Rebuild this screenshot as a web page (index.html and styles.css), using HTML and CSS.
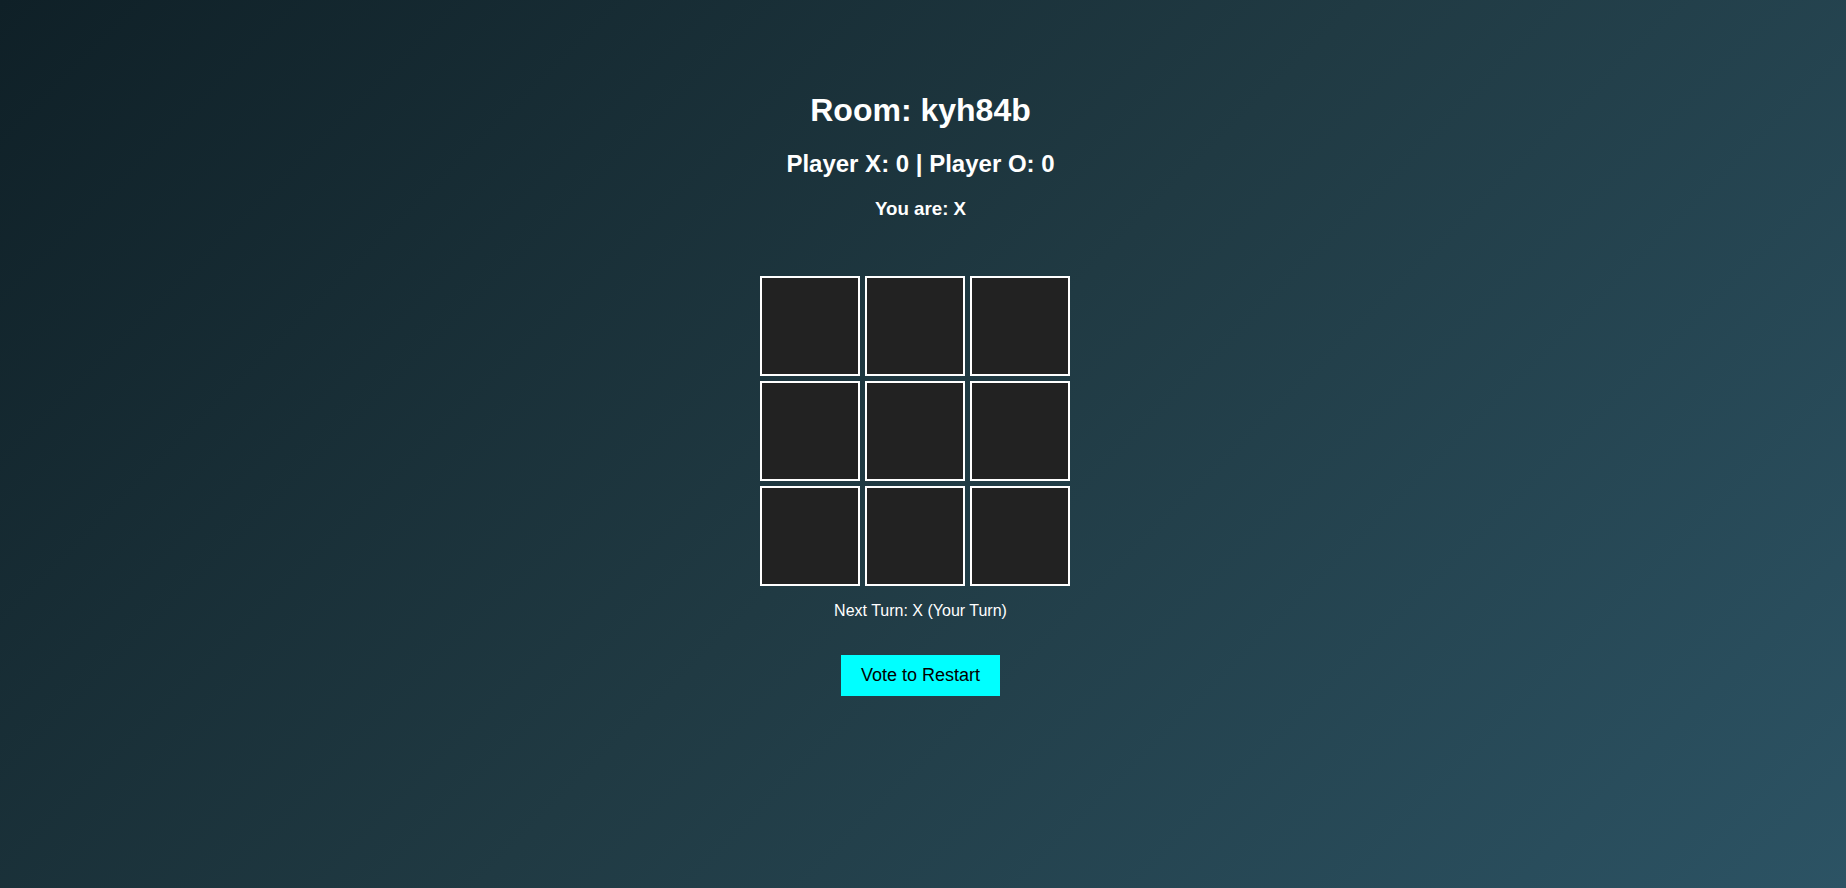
FILE: index.html
```html
<!DOCTYPE html>
<html lang="en">
<head>
<meta charset="utf-8">
<title>Tic Tac Toe</title>
<link rel="stylesheet" href="styles.css">
</head>
<body>
<main class="game">
  <h1 class="room">Room: kyh84b</h1>
  <h2 class="score">Player X: 0 | Player O: 0</h2>
  <h3 class="you">You are: X</h3>
  <div class="board-wrap">
    <div class="board">
      <div class="cell"></div>
      <div class="cell"></div>
      <div class="cell"></div>
      <div class="cell"></div>
      <div class="cell"></div>
      <div class="cell"></div>
      <div class="cell"></div>
      <div class="cell"></div>
      <div class="cell"></div>
    </div>
  </div>
  <p class="status">Next Turn: X (Your Turn)</p>
  <button class="restart">Vote to Restart</button>
</main>
</body>
</html>
```
FILE: styles.css
```css
html, body {
  margin: 0;
  padding: 0;
}
body {
  min-height: 100vh;
  background: linear-gradient(135deg, #0f2027 0%, #203a43 50%, #2c5364 100%);
  font-family: "Liberation Sans", Arial, sans-serif;
  color: #ffffff;
}
.game {
  display: flex;
  flex-direction: column;
  align-items: center;
  padding-top: 92px;
  padding-right: 5px;
  text-align: center;
}
.room {
  margin: 0 0 21px;
  font-size: 32px;
  line-height: 37px;
  font-weight: bold;
}
.score {
  margin: 0 0 20px;
  font-size: 24px;
  line-height: 28px;
  font-weight: bold;
}
.you {
  margin: 0;
  font-size: 18.72px;
  line-height: 22px;
  font-weight: bold;
}
.board-wrap {
  width: 322px;
  margin-top: 56px;
}
.board {
  display: grid;
  grid-template-columns: repeat(3, 100px);
  grid-auto-rows: 100px;
  gap: 5px;
  justify-content: start;
}
.cell {
  box-sizing: border-box;
  background: #222222;
  border: 2px solid #ffffff;
}
.status {
  margin: 16px 0 0;
  font-size: 16px;
  line-height: 18px;
}
.restart {
  margin-top: 35px;
  padding: 10px 20px;
  border: none;
  background: #00ffff;
  color: #000000;
  font-family: "Liberation Sans", Arial, sans-serif;
  font-size: 18px;
  line-height: 21px;
  cursor: pointer;
}
```
